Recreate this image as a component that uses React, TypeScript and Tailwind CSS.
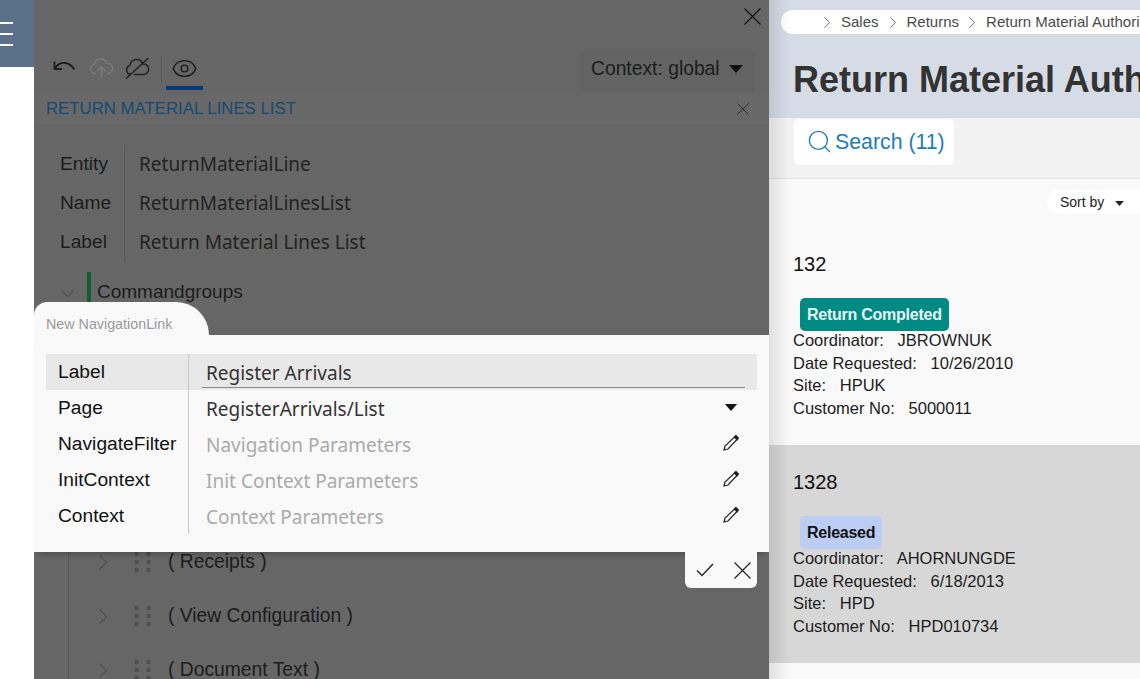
import { Eye, Search } from "lucide-react";

const fieldRows = [
  { label: "Entity", value: "ReturnMaterialLine" },
  { label: "Name", value: "ReturnMaterialLinesList" },
  { label: "Label", value: "Return Material Lines List" },
];

const treeRows = ["( Receipts )", "( View Configuration )", "( Document Text )"];

const records = [
  {
    id: "132",
    status: "Return Completed",
    statusClass: "bg-[#008a84] text-[#e6f5f3]",
    coordinator: "JBROWNUK",
    date: "10/26/2010",
    site: "HPUK",
    customer: "5000011",
    rowClass: "bg-[#f9f9f9] h-[231px] pt-[38px]",
  },
  {
    id: "1328",
    status: "Released",
    statusClass: "bg-[#bccdf3] text-[#111]",
    coordinator: "AHORNUNGDE",
    date: "6/18/2013",
    site: "HPD",
    customer: "HPD010734",
    rowClass: "bg-[#d7d7d7] h-[218px] pt-[25px]",
  },
];

function Grip() {
  return (
    <svg width="17" height="22" viewBox="0 0 17 22" className="shrink-0 fill-[#4f4f4f]">
      <circle cx="2.5" cy="3" r="2.3" />
      <circle cx="14.5" cy="3" r="2.3" />
      <circle cx="2.5" cy="11" r="2.3" />
      <circle cx="14.5" cy="11" r="2.3" />
      <circle cx="2.5" cy="19" r="2.3" />
      <circle cx="14.5" cy="19" r="2.3" />
    </svg>
  );
}

function Caret({ className }: { className: string }) {
  return (
    <svg viewBox="0 0 14 8" className={`shrink-0 ${className}`}>
      <path d="M0 0h14L7 8z" />
    </svg>
  );
}

function Cross({ size, className }: { size: number; className: string }) {
  return (
    <svg width={size} height={size} viewBox="0 0 16 16" className={`shrink-0 ${className}`} fill="none" stroke="currentColor" strokeWidth="1.1">
      <path d="M0.5 0.5L15.5 15.5M15.5 0.5L0.5 15.5" />
    </svg>
  );
}

function ChevronRightThin({ className }: { className: string }) {
  return (
    <svg viewBox="0 0 8 15" className={`shrink-0 ${className}`} fill="none" stroke="currentColor" strokeWidth="1.1">
      <path d="M0.5 0.5L7.5 7.5L0.5 14.5" />
    </svg>
  );
}

function UndoIcon() {
  return (
    <svg width="26" height="20" viewBox="0 0 26 20" fill="none" stroke="#1c1c1c" strokeWidth="1.8" className="shrink-0">
      <path d="M4 10C7 6 11 4.5 14.5 5C18 5.5 21 8 23.5 11.5" />
      <path d="M3.5 3.5V11H11" />
    </svg>
  );
}

function CloudUploadIcon() {
  return (
    <svg width="25" height="22" viewBox="0 0 25 22" fill="none" stroke="#7c7c7c" strokeWidth="1.4" className="shrink-0">
      <path d="M7 16.5H6A4.6 4.6 0 0 1 5.2 7.4A6.6 6.6 0 0 1 18 6.4A5 5 0 0 1 19 16.5H18" />
      <path d="M12.5 21V10M8.5 14L12.5 10L16.5 14" />
    </svg>
  );
}

function CloudSlashIcon() {
  return (
    <svg width="25" height="22" viewBox="0 0 25 22" fill="none" stroke="#222222" strokeWidth="1.5" className="shrink-0">
      <path d="M6 17.5A4.6 4.6 0 0 1 5 8.5A6.6 6.6 0 0 1 17.8 7A5.2 5.2 0 0 1 19 17.5H9" />
      <path d="M1 21.5L23.5 1" />
    </svg>
  );
}

function PencilIcon() {
  return (
    <svg width="16" height="16" viewBox="0 0 16 16" fill="none" stroke="#222222" strokeWidth="1.2" className="shrink-0">
      <path d="M1 15L2 11L11.5 2L14 4.5L5 14Z" />
      <path d="M11.5 1.5L13 0.5L15.5 3L14 5Z" fill="#222222" />
    </svg>
  );
}

function EditorPanel() {
  return (
    <div className="relative w-[735px] shrink-0 bg-[#666666] text-[#1c1c1c]">
      <div className="flex h-[32px] justify-end pr-[8px] pt-[8px]">
        <Cross size={17} className="text-[#111]" />
      </div>

      <div className="mt-[20px] flex h-[38px] items-start justify-between pl-[17px] pr-[14px]">
        <div className="flex h-[38px] items-center">
          <div className="flex items-center pb-[6px]">
            <UndoIcon />
            <div className="ml-[12px]">
              <CloudUploadIcon />
            </div>
            <div className="ml-[11px]">
              <CloudSlashIcon />
            </div>
          </div>
          <div className="ml-[11px] mb-[2px] h-[26px] w-px bg-[#5a5a5a]" />
          <div className="ml-[4px] flex h-[38px] w-[37px] shrink-0 justify-center border-b-[4px] border-[#0a3a78] pt-[3px]">
            <Eye size={27} strokeWidth={1.3} className="text-[#1c1c1c]" />
          </div>
        </div>
        <div className="-mt-[2px] flex h-[42px] w-[175px] items-center rounded-sm bg-[#636363] pb-[4px] pl-[11px] font-['Liberation_Sans',sans-serif] text-[19.3px] text-[#1c1c1c]">
          Context: global
          <Caret className="ml-[9px] h-[8px] w-[14px] fill-[#111]" />
        </div>
      </div>

      <div className="mt-[4px] flex h-[30px] items-center justify-between bg-[#686868] pl-[12px] pr-[20px] font-['Liberation_Sans',sans-serif] text-[16.8px] text-[#144a73]">
        <span>RETURN MATERIAL LINES LIST</span>
        <Cross size={12} className="text-[#222]" />
      </div>

      <div className="ml-[26px] mt-[21px] flex flex-col">
        {fieldRows.map((row) => (
          <div key={row.label} className="flex h-[39px] items-center">
            <span className="w-[64px] pb-px font-['Liberation_Sans',sans-serif] text-[19.2px]">{row.label}</span>
            <span className="h-[39px] border-l border-[#5a5a5a] pl-[14px] font-['Noto_Sans',sans-serif] text-[19px] leading-[39px] text-[#222]">
              {row.value}
            </span>
          </div>
        ))}
      </div>

      <div className="ml-[27px] mt-[15px] flex h-[30px] items-center">
        <svg width="13" height="7" viewBox="0 0 13 7" fill="none" stroke="#505050" strokeWidth="1.1" className="mt-[2px] shrink-0">
          <path d="M0.5 0.5L6.5 6.5L12.5 0.5" />
        </svg>
        <div className="mb-[8px] ml-[13px] h-[32px] w-[4px] shrink-0 bg-[#0f5f34]" />
        <span className="ml-[6px] font-['Liberation_Sans',sans-serif] text-[19px]">Commandgroups</span>
      </div>

      <div className="ml-[34px] mt-[240px] flex flex-col gap-[24px] border-l border-[#585858] pb-[20px] pl-[30px]">
        {treeRows.map((row) => (
          <div key={row} className="flex h-[30px] items-center">
            <ChevronRightThin className="h-[15px] w-[8px] text-[#505050]" />
            <div className="ml-[27px]">
              <Grip />
            </div>
            <span className="ml-[17px] font-['Liberation_Sans',sans-serif] text-[19.3px]">{row}</span>
          </div>
        ))}
      </div>

      <NavigationLinkDialog />
    </div>
  );
}

function NavigationLinkDialog() {
  const labels = ["Label", "Page", "NavigateFilter", "InitContext", "Context"];
  const params = ["Navigation Parameters", "Init Context Parameters", "Context Parameters"];

  return (
    <div className="absolute left-0 top-[302px] w-[735px]">
      <div className="flex h-[33px] w-[175px] items-center rounded-tl-[20px] rounded-tr-[50px] bg-[#f9f9f9] pl-[12px] pt-[13px] font-['Liberation_Sans',sans-serif] text-[14.3px] text-[#999999]">
        New NavigationLink
      </div>
      <div className="flex h-[217px] bg-[#f9f9f9] pl-[12px] pr-[12px] pt-[19px] shadow-[0_6px_6px_-4px_rgba(0,0,0,0.25)]">
        <div className="w-[142px] shrink-0 font-['Liberation_Sans',sans-serif] text-[19.2px] text-[#111]">
          {labels.map((label, i) => (
            <div key={label} className={`flex h-[36px] items-center pl-[12px] ${i === 0 ? "bg-[#e8e8e8]" : ""}`}>
              {label}
            </div>
          ))}
        </div>
        <div className="h-[180px] w-[569px] border-l border-[#c8c8c8] font-['Noto_Sans',sans-serif] text-[19px]">
          <div className="h-[36px] bg-[#e8e8e8] pl-[13px] pr-[12px]">
            <div className="flex h-[34px] items-center border-b border-[#8a8a8a] pl-[4px] pt-[5px] text-[#333]">Register Arrivals</div>
          </div>
          <div className="flex h-[36px] items-center justify-between pl-[17px] pr-[19px] pt-[2px] text-[#333]">
            RegisterArrivals/List
            <Caret className="mb-[3px] h-[7px] w-[14px] fill-[#111]" />
          </div>
          {params.map((param) => (
            <div key={param} className="flex h-[36px] items-center justify-between pl-[17px] pr-[18px] pt-[2px] text-[#aaaaaa]">
              {param}
              <div className="mb-[4px]">
                <PencilIcon />
              </div>
            </div>
          ))}
        </div>
      </div>
      <div className="relative ml-[651px] flex h-[36px] w-[72px] items-center justify-between rounded-b-[6px] bg-[#f9f9f9] pl-[11px] pr-[6px]">
        <svg width="18" height="14" viewBox="0 0 18 14" fill="none" stroke="#222222" strokeWidth="1.4" className="shrink-0">
          <path d="M1 7.5L6 12.5L17 1" />
        </svg>
        <Cross size={17} className="text-[#222]" />
      </div>
    </div>
  );
}

function RecordsPanel() {
  return (
    <div className="relative min-w-0 flex-1 overflow-hidden bg-[#f9f9f9] font-['Liberation_Sans',sans-serif]">
      <div className="h-[118px] bg-[#d6dce6] pl-[12px] pt-[10px]">
        <div className="flex h-[24px] items-center whitespace-nowrap rounded-l-full bg-white pl-[43px] text-[15px] text-[#4a4a4a]">
          <ChevronRightThin className="h-[11px] w-[6px]" />
          <span className="ml-[11px]">Sales</span>
          <ChevronRightThin className="ml-[11px] h-[11px] w-[6px]" />
          <span className="ml-[11px]">Returns</span>
          <ChevronRightThin className="ml-[10px] h-[11px] w-[6px]" />
          <span className="ml-[11px]">Return Material Authorization</span>
        </div>
        <div className="mt-[23px] whitespace-nowrap pl-[12px] text-[36px] font-bold leading-[46px] text-[#333333]">
          Return Material Authorization
        </div>
      </div>

      <div className="h-[61px] border-b border-[#e4e4e4] bg-[#f3f2f3] pl-[25px] pt-px">
        <div className="flex h-[46px] w-[160px] items-center rounded-[5px] bg-white pl-[12px] text-[21.3px] text-[#1b7cc0]">
          <Search size={27} strokeWidth={1.2} className="-mt-[1px] shrink-0" />
          <span className="ml-[2px] pt-[1px]">Search (11)</span>
        </div>
      </div>

      <div className="flex justify-end pt-[11px]">
        <div className="flex h-[24px] w-[93px] items-center rounded-l-full bg-white pl-[13px] text-[14px] text-[#222]">
          Sort by
          <Caret className="ml-[10px] mt-[2px] h-[5px] w-[11px] fill-[#222]" />
        </div>
      </div>

      {records.map((r) => (
        <div key={r.id} className={`pl-[25px] text-[16.5px] leading-[22.6px] text-[#1c1c1c] ${r.rowClass}`}>
          <div className="-ml-px text-[20px] leading-[24px] text-[#111]">{r.id}</div>
          <div className={`ml-[6px] mt-[22px] flex h-[33px] w-fit items-center rounded-[5px] px-[7px] pt-px text-[16px] font-bold tracking-[-0.25px] ${r.statusClass}`}>
            {r.status}
          </div>
          <div className="-ml-px -mt-[2px]">Coordinator:&nbsp;&nbsp; {r.coordinator}</div>
          <div className="-ml-px">Date Requested:&nbsp;&nbsp; {r.date}</div>
          <div className="-ml-px">Site:&nbsp;&nbsp; {r.site}</div>
          <div className="-ml-px">Customer No:&nbsp;&nbsp; {r.customer}</div>
        </div>
      ))}

      <div className="pointer-events-none absolute inset-y-0 left-0 w-[20px] bg-gradient-to-r from-black/10 to-transparent" />
    </div>
  );
}

export default function App() {
  return (
    <div className="flex h-[679px] w-[1140px] overflow-hidden bg-white">
      <div className="w-[34px] shrink-0 overflow-hidden">
        <div className="flex h-[67px] flex-col justify-center gap-[9px] bg-[#5b7189]">
          <div className="h-[2px] w-[13px] bg-white" />
          <div className="h-[2px] w-[13px] bg-white" />
          <div className="h-[2px] w-[13px] bg-white" />
        </div>
      </div>
      <EditorPanel />
      <RecordsPanel />
    </div>
  );
}
